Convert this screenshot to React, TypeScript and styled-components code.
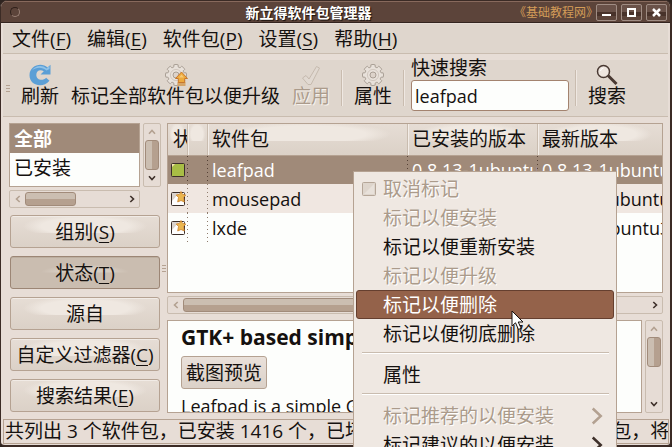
import React from "react";
import styled, { createGlobalStyle, css } from "styled-components";

const c = {
  ink: "#15110f",
  base: "#e7ddd6",
  bar: "#dfd6cd",
  line: "#c9bcaf",
  edge: "#b5a292",
  select: "#a08a79",
  paper: "#fdfefc",
  faded: "#ab9b8b",
};

const Global = createGlobalStyle`
  * { box-sizing: border-box; }
  html, body { margin: 0; background: #2e2420; overflow: hidden; }
  body, button, input { font-family: "Open Sans", "Noto Sans CJK SC", sans-serif; font-size: 19px; line-height: 24px; color: ${c.ink}; }
  button { margin: 0; padding: 0; border: 0; background: none; white-space: nowrap; }
  u { text-underline-offset: 3px; text-decoration-thickness: 1px; }
`;

const gloss = css`
  background: radial-gradient(ellipse 42% 70% at 50% 60%, #efe8e1 0 70%, transparent 100%) top / 100% 55% no-repeat,
    linear-gradient(#e6ddd5, #dbd1c7);
`;

const Desktop = styled.div`
  position: relative;
  height: 100vh;
  overflow: hidden;
`;

const Frame = styled.div`
  height: 100%;
  min-height: 440px;
  display: flex;
  flex-direction: column;
  overflow: hidden;
  background: ${c.base};
  border: 1px solid #3b2b25;
  border-right-width: 2px;
  border-bottom-width: 2px;
  border-radius: 7px 7px 5px 5px;
`;

const TitleBar = styled.header`
  display: grid;
  grid-template-columns: 1fr auto 1fr;
  align-items: center;
  height: 22px;
  flex: none;
  padding: 0 3px 0 9px;
  background: #5c443a;
  border-top: 1px solid #87695c;
  border-bottom: 1px solid #33241f;
`;

const Orb = styled.button`
  width: 10px;
  height: 10px;
  border: 1px solid #2f201b;
  border-right-color: #9a8176;
  border-bottom-color: #9a8176;
  border-radius: 50%;
`;

const Title = styled.h1`
  margin: 0;
  padding-right: 60px;
  font: bold 14px/20px "Noto Sans CJK SC", sans-serif;
  color: #fff;
  text-shadow: 1px 1px 1px #160f0c;
`;

const TitleRight = styled.div`
  display: flex;
  align-items: center;
  gap: 4px;
  justify-content: flex-end;
  margin-left: -60px;
`;

const Credit = styled.span`
  font: 12px/20px "Noto Sans CJK SC", sans-serif;
  font-feature-settings: "halt";
  color: #d39c58;
  white-space: nowrap;
`;

const Chrome = styled.button`
  display: grid;
  place-items: center;
  width: 21px;
  height: 17px;
  border: 1px solid #a08d84;
  border-radius: 2px;
  background: linear-gradient(#6a5249 0 45%, #48322a 45% 75%, #5c443a 75%);
`;

const MenuBar = styled.nav`
  display: flex;
  flex: none;
  height: 30px;
  margin: 1px 2px 0;
  padding-left: 1px;
  background: ${c.bar};
  border-bottom: 1px solid ${c.line};
`;

const MenuTitle = styled.button`
  padding: 0 8px;
`;

const ToolBar = styled.div`
  display: flex;
  align-items: center;
  flex: none;
  height: 57px;
  margin: 6px 2px 0;
  padding-left: 3px;
  background: ${c.bar};
  border-bottom: 1px solid ${c.line};
`;

const Grip = styled.span`
  flex: none;
  width: 4px;
  height: 7px;
  background: repeating-linear-gradient(${c.edge} 0 1px, transparent 1px 3px);
`;

const Tool = styled.button`
  display: flex;
  flex-direction: column;
  align-items: center;
  flex: none;
  padding: 0 6px;
  line-height: 20px;
  color: ${c.ink};
  &:disabled {
    color: ${c.faded};
    text-shadow: 1px 1px 0 #f6f1ec;
  }
  svg {
    display: block;
  }
`;

const ToolGroup = styled.div`
  display: flex;
  align-self: flex-start;
  padding: 4px 5px 0;
`;

const Divider = styled.span`
  flex: none;
  width: 2px;
  height: 36px;
  background: linear-gradient(90deg, ${c.line} 50%, #efe8e2 50%);
`;

const Search = styled.label`
  display: flex;
  flex-direction: column;
  align-self: flex-start;
  gap: 4px;
  flex: none;
  padding: 0 6px;
  line-height: 16px;
  input {
    width: 158px;
    height: 31px;
    padding: 0 3px;
    font-size: 18px;
    background: ${c.paper};
    border: 1px solid #a3836f;
    border-radius: 3px;
    outline: 0;
  }
`;

const Body = styled.main`
  flex: 1;
  min-height: 0;
  display: flex;
  padding: 6px 7px 6px 8px;
`;

const Side = styled.aside`
  flex: none;
  width: 152px;
  display: flex;
  flex-direction: column;
`;

const FilterArea = styled.div`
  display: grid;
  grid-template-columns: 131px 18px;
  grid-template-rows: 64px 18px;
  gap: 3px;
  margin-bottom: 7px;
`;

const FilterList = styled.div`
  border: 1px solid ${c.edge};
  background: ${c.paper};
  overflow: hidden;
`;

const Filter = styled.button<{ $on?: boolean }>`
  display: block;
  width: 100%;
  height: 29px;
  padding-left: 4px;
  text-align: left;
  ${(p) => p.$on && css`
    color: #fff;
    font-weight: bold;
    background: ${c.select};
  `}
`;

const Modes = styled.div`
  display: grid;
  gap: 8px;
  margin: 0 1px;
`;

const Push = styled.button<{ $down?: boolean }>`
  height: 33px;
  border: 1px solid ${c.edge};
  border-radius: 3px;
  box-shadow: inset 0 1px 0 #f1ebe6;
  ${gloss}
  ${(p) => p.$down && css`
    border-color: #9c8675;
    box-shadow: inset 0 1px 0 #bcae9f;
    background: radial-gradient(ellipse 30% 50% at 50% 100%, #d6ccc1 0 60%, transparent 100%) top / 100% 50% no-repeat, #cabdb0;
  `}
`;

const Splitter = styled.div`
  flex: none;
  width: 6px;
  display: grid;
  place-items: center;
`;

const Content = styled.section`
  flex: 1;
  min-width: 0;
  display: flex;
  flex-direction: column;
`;

const ListBox = styled.div`
  flex: 1;
  min-height: 0;
  overflow: hidden;
  border: 1px solid ${c.edge};
  background: ${c.paper};
  margin-bottom: 3px;
`;

const Table = styled.table`
  width: 100%;
  table-layout: fixed;
  border-collapse: collapse;
  th, td {
    overflow: hidden;
    white-space: nowrap;
    text-align: left;
    padding: 0 0 0 5px;
  }
  th {
    height: 31px;
    font-weight: normal;
    ${gloss}
    border-bottom: 1px solid ${c.edge};
  }
  th + th {
    box-shadow: inset 1px 0 0 ${c.line}, inset 2px 0 0 #f3ede8;
  }
  td {
    height: 29px;
    font-size: 18px;
  }
  td + td {
    background: repeating-linear-gradient(#8f7c6d 0 1px, transparent 1px 4px) 0 0 / 1px 100% no-repeat;
  }
  td:first-child {
    padding-left: 3px;
  }
`;

const Row = styled.tr<{ $tone: "selected" | "tinted" | "plain" }>`
  ${(p) => p.$tone === "selected" && css`
    color: #fff;
    background: ${c.select};
    td + td {
      background: repeating-linear-gradient(#554136 0 1px, transparent 1px 4px) 0 0 / 1px 100% no-repeat;
    }
  `}
  ${(p) => p.$tone === "tinted" && css`
    background: #f0e7e1;
  `}
  svg {
    display: block;
  }
`;

const Track = styled.div<{ $vertical?: boolean }>`
  display: flex;
  flex: none;
  flex-direction: ${(p) => (p.$vertical ? "column" : "row")};
  align-items: stretch;
  ${(p) => (p.$vertical ? "width: 18px;" : "height: 18px;")}
  border: 1px solid ${c.line};
  border-radius: 2px;
  background: #e6dcd5;
`;

const Arrow = styled.button`
  flex: none;
  width: 15px;
  height: 16px;
  display: grid;
  place-items: center;
`;

const Thumb = styled.div<{ $vertical?: boolean; $size: string }>`
  flex: 0 0 ${(p) => p.$size};
  margin: ${(p) => (p.$vertical ? "0 1px auto" : "1px auto 1px 0")};
  border: 1px solid #a18b7a;
  border-radius: 3px;
  background: linear-gradient(${(p) => (p.$vertical ? "90deg" : "180deg")}, #cbbeb1 50%, #b5a08f 50%);
`;

const Details = styled.div`
  flex: none;
  display: flex;
  gap: 3px;
  height: 93px;
  margin-top: 6px;
`;

const Page = styled.article`
  flex: 1;
  min-width: 0;
  overflow: hidden;
  border: 1px solid ${c.edge};
  background: ${c.paper};
  padding: 3px 0 0 13px;
  white-space: nowrap;
  font-size: 18px;
  h2 {
    margin: 0 0 6px;
    font-size: 21px;
    line-height: 26px;
  }
  p {
    margin: 5px 0 0;
  }
`;

const Preview = styled.button`
  display: block;
  height: 33px;
  padding: 0 4px;
  border: 1px solid ${c.edge};
  border-radius: 3px;
  background: linear-gradient(#eae1da, #dbd1c8);
`;

const Status = styled.footer`
  flex: none;
  height: 25px;
  margin: 0 1px 1px 2px;
  padding-left: 1px;
  line-height: 23px;
  border: 1px solid ${c.edge};
  overflow: hidden;
  white-space: nowrap;
`;

const Popup = styled.div`
  position: absolute;
  left: 353px;
  top: 171px;
  width: 264px;
  padding: 2px;
  background: #efe8e2;
  border: 1px solid ${c.edge};
`;

const Item = styled.button<{ $hot?: boolean }>`
  display: flex;
  align-items: center;
  width: 100%;
  height: 29px;
  padding: 0 6px 0 5px;
  border: 1px solid transparent;
  border-radius: 3px;
  color: ${c.ink};
  &:disabled {
    color: ${c.faded};
    text-shadow: 1px 1px 0 #fff;
  }
  ${(p) => p.$hot && css`
    color: #fff;
    background: #94624a;
    border-color: #653f2f;
  `}
`;

const ItemIcon = styled.span`
  width: 21px;
  flex: none;
  text-align: left;
  svg {
    display: block;
  }
`;

const ItemText = styled.span`
  flex: 1;
  text-align: left;
`;

const Rule = styled.hr`
  height: 2px;
  margin: 4px 5px 6px 6px;
  border: 0;
  background: linear-gradient(${c.line} 50%, #fff 50%);
`;

const Pointer = styled.svg`
  position: absolute;
  left: 511px;
  top: 310px;
`;

const turns = { up: 0, right: 90, down: 180, left: 270 };

function Chevron({ to, dim, size = 8 }: { to: keyof typeof turns; dim?: boolean; size?: number }) {
  return (
    <svg width={size} height={size} viewBox="0 0 8 8" aria-hidden="true">
      <path d="M1 5.7 4 2.5 7 5.7" transform={`rotate(${turns[to]} 4 4)`} fill="none" stroke={dim ? "#b3a191" : "#3e302a"} strokeWidth={size > 8 ? 1 : 1.6} />
    </svg>
  );
}

function ScrollBar({ vertical, thumb }: { vertical?: boolean; thumb: string }) {
  return (
    <Track $vertical={vertical}>
      <Arrow aria-label="向前滚动"><Chevron to={vertical ? "up" : "left"} dim /></Arrow>
      <Thumb $vertical={vertical} $size={thumb} />
      <Arrow aria-label="向后滚动"><Chevron to={vertical ? "down" : "right"} /></Arrow>
    </Track>
  );
}

const gearPath = Array.from({ length: 8 }, (_, i) => {
  const at = (r: number, deg: number) => {
    const a = ((i * 45 + deg) * Math.PI) / 180;
    return `${(11 + r * Math.sin(a)).toFixed(2)} ${(11 - r * Math.cos(a)).toFixed(2)}`;
  };
  return `${i ? "L" : "M"}${at(8.4, -15)}L${at(10.4, -12)}Q${at(11, 0)} ${at(10.4, 12)}L${at(8.4, 15)}Q${at(7.8, 22)} ${at(8.4, 30)}`;
}).join("") + "Z";

function Gear({ upgrade }: { upgrade?: boolean }) {
  return (
    <svg width="24" height="22" viewBox="-1 0 24 22" aria-hidden="true">
      <path d={gearPath} fill="#e8e1da" stroke="#aaa096" />
      <circle cx="11" cy="11" r="5.6" fill="none" stroke="#d2c8bf" />
      <circle cx="11" cy="11" r="3" fill="#ddd3ca" stroke="#a99e94" />
      {upgrade && (
        <>
          <path d="M12.5 18h8v4h-8z" fill="#d5a467" />
          <path d="M16.5 8 22.5 14.5h-2.8v4h-6.4v-4h-2.8z" fill="#edaa3d" stroke="#c7772e" />
          <path d="M16.5 10.5 19 13.5h-5z" fill="#f5ca78" />
        </>
      )}
    </svg>
  );
}

function Refresh() {
  return (
    <svg width="22" height="22" viewBox="0 0 22 22" aria-hidden="true">
      <path d="M21.5.8v9.6h-10l3.3-3.2C10.5 4.9 7.3 7.3 7.3 11c0 5.200 6.700 6.400 9.800 2.700l3.400 3C13.900 24.700.5 21.500.5 11.200.5 1.500 12.600-2.300 18.500 3.600z" fill="#5b9fd6" />
      <path d="M3 6.500C6 1.500 13 .5 17.500 4.500l3-2.500v3l-3 1.500C13 2.500 7 3 3 6.500z" fill="#91c3e8" />
    </svg>
  );
}

function Tick() {
  return (
    <svg width="22" height="22" viewBox="0 0 22 22" aria-hidden="true">
      <path d="M2.500 14 6 11.500l3 3.500L16.500 2.500l3 1.500L11 20.500H8z" fill="#e1d9d1" stroke="#c5baae" strokeLinejoin="round" />
    </svg>
  );
}

function Magnifier() {
  return (
    <svg width="22" height="22" viewBox="0 0 22 22" aria-hidden="true">
      <path d="m12 11.500 8.500 8.500" stroke="#493932" strokeWidth="3" />
      <circle cx="7.500" cy="7.500" r="6" fill="#eee6df" stroke="#493932" strokeWidth="1.500" />
      <path d="M4.500 7a3.500 3.500 0 0 1 3-3" fill="none" stroke="#fff" />
    </svg>
  );
}

function Box({ kind }: { kind: "installed" | "starred" | "empty" }) {
  const edge = kind === "empty" ? "#b5a698" : "#3b2e29";
  return (
    <svg width="15" height="15" viewBox="0 0 15 15" aria-hidden="true">
      <rect x=".5" y="1.500" width="13" height="13" rx="1" fill={kind === "installed" ? "#a8bd45" : kind === "empty" ? "#ded5cc" : "#fff"} stroke={edge} />
      {kind === "installed" && <path d="M1 2h3L1 5z" fill="#f7e5b4" />}
      {kind === "empty" && <path d="M2 13 12 3v10z" fill="#e8e1da" />}
      {kind === "starred" && (
        <>
          <path d="M1 2h7L1 10z" fill="#d9d2cc" />
          <path d="m10 .5 1.600 2.900 3.200.6-2.300 2.500.8 4.500-3.300-1.500-3.300 1.500.8-4.500L5.200 4l3.200-.6z" fill="#eab64f" stroke="#cb812d" strokeWidth=".8" />
        </>
      )}
    </svg>
  );
}

const menus = [["文件", "F"], ["编辑", "E"], ["软件包", "P"], ["设置", "S"], ["帮助", "H"]];
const modes = [["组别", "S"], ["状态", "T"], ["源自", ""], ["自定义过滤器", "C"], ["搜索结果", "E"]];

const packages = [
  { name: "leafpad", now: "0.8.13-1ubuntu1", latest: "0.8.13-1ubuntu1", icon: "installed", tone: "selected" },
  { name: "mousepad", now: "", latest: "0.2.13-3ubuntu1", icon: "starred", tone: "tinted" },
  { name: "lxde", now: "", latest: "0.4.2-0ubuntu3", icon: "starred", tone: "plain" },
] as const;

function Mnemonic({ text, letter }: { text: string; letter: string }) {
  return <>{text}{letter && <>(<u>{letter}</u>)</>}</>;
}

type Entry = { text: string; off?: boolean; hot?: boolean; box?: boolean; sub?: boolean };
const entries: (Entry | null)[] = [
  { text: "取消标记", off: true, box: true },
  { text: "标记以便安装", off: true },
  { text: "标记以便重新安装" },
  { text: "标记以便升级", off: true },
  { text: "标记以便删除", hot: true },
  { text: "标记以便彻底删除" },
  null,
  { text: "属性" },
  null,
  { text: "标记推荐的以便安装", off: true, sub: true },
  { text: "标记建议的以便安装", sub: true },
];

export default function App() {
  return (
    <Desktop>
      <Global />
      <Frame>
        <TitleBar>
          <Orb aria-label="窗口菜单" />
          <Title>新立得软件包管理器</Title>
          <TitleRight>
            <Credit>《基础教程网》</Credit>
            <Chrome aria-label="最小化"><svg width="9" height="9"><path d="M0 7h9" stroke="#fff" strokeWidth="2" /></svg></Chrome>
            <Chrome aria-label="最大化"><svg width="9" height="9"><path d="M1 1h7v7H1z" fill="none" stroke="#fff" strokeWidth="2" /></svg></Chrome>
            <Chrome aria-label="关闭"><svg width="9" height="9"><path d="m1 1 7 7m0-7L1 8" stroke="#fff" strokeWidth="2.500" /></svg></Chrome>
          </TitleRight>
        </TitleBar>
        <MenuBar>
          {menus.map(([text, letter]) => <MenuTitle key={text}><Mnemonic text={text} letter={letter} /></MenuTitle>)}
        </MenuBar>
        <ToolBar>
          <Grip />
          <ToolGroup>
            <Tool><Refresh />刷新</Tool>
            <Tool><Gear upgrade />标记全部软件包以便升级</Tool>
            <Tool disabled><Tick />应用</Tool>
          </ToolGroup>
          <Divider />
          <ToolGroup><Tool><Gear />属性</Tool></ToolGroup>
          <Divider />
          <Search>快速搜索<input type="text" defaultValue="leafpad" /></Search>
          <Divider />
          <ToolGroup><Tool><Magnifier />搜索</Tool></ToolGroup>
        </ToolBar>
        <Body>
          <Side>
            <FilterArea>
              <FilterList>
                <Filter $on>全部</Filter>
                <Filter>已安装</Filter>
              </FilterList>
              <ScrollBar vertical thumb="30px" />
              <ScrollBar thumb="51px" />
            </FilterArea>
            <Modes>
              {modes.map(([text, letter]) => (
                <Push key={text} $down={text === "状态"}><Mnemonic text={text} letter={letter} /></Push>
              ))}
            </Modes>
          </Side>
          <Splitter><Grip /></Splitter>
          <Content>
            <ListBox>
              <Table>
                <colgroup>
                  <col width="19" /><col width="20" /><col width="200" /><col width="130" /><col />
                </colgroup>
                <thead>
                  <tr><th>状</th><th aria-label="支持" /><th>软件包</th><th>已安装的版本</th><th>最新版本</th></tr>
                </thead>
                <tbody>
                  {packages.map((p) => (
                    <Row key={p.name} $tone={p.tone}>
                      <td><Box kind={p.icon} /></td><td /><td>{p.name}</td><td>{p.now}</td><td>{p.latest}</td>
                    </Row>
                  ))}
                </tbody>
              </Table>
            </ListBox>
            <ScrollBar thumb="80%" />
            <Details>
              <Page>
                <h2>GTK+ based simple text editor</h2>
                <Preview>截图预览</Preview>
                <p>Leafpad is a simple GTK+ based text editor</p>
              </Page>
              <ScrollBar vertical thumb="30px" />
            </Details>
          </Content>
        </Body>
        <Status>共列出 3 个软件包，已安装 1416 个，已坏 0 个。将安装 / 升级 0 个软件包，将删除 0 个软件包</Status>
      </Frame>
      <Popup role="menu">
        {entries.map((e, i) => e ? (
          <Item key={i} role="menuitem" disabled={e.off} $hot={e.hot}>
            <ItemIcon>{e.box && <Box kind="empty" />}</ItemIcon>
            <ItemText>{e.text}</ItemText>
            {e.sub && <Chevron to="right" dim={e.off} size={20} />}
          </Item>
        ) : <Rule key={i} />)}
      </Popup>
      <Pointer width="14" height="22" viewBox="0 0 14 22" aria-hidden="true">
        <path d="M1 1v15l3.500-3.200 3 6.700 2.700-1.200-3-6.300H12z" fill="#fff" stroke="#17110e" />
      </Pointer>
    </Desktop>
  );
}
